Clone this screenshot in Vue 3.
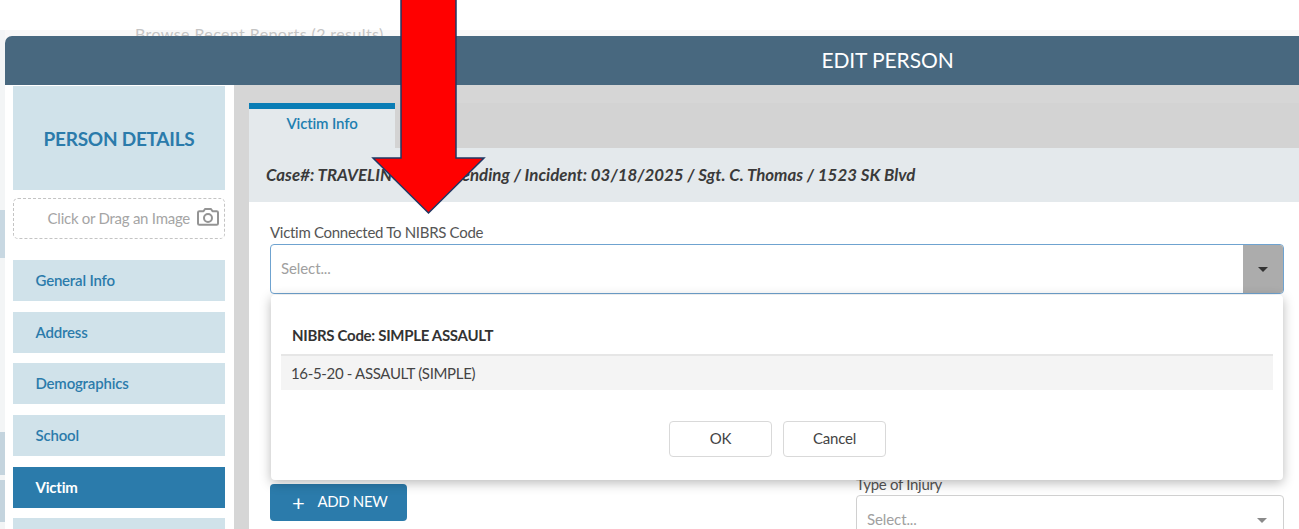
<script setup>
const navItems = [
  { label: 'General Info' },
  { label: 'Address' },
  { label: 'Demographics' },
  { label: 'School' },
  { label: 'Victim', active: true },
  { label: '' },
]
</script>

<template>
  <div class="page">
    <div class="backdrop">
      <div class="back-title">Browse Recent Reports (2 results)</div>
    </div>
    <div class="modal">
      <header class="modal-head">EDIT PERSON</header>
      <div class="modal-body">
        <aside class="side">
          <div class="side-title">PERSON DETAILS</div>
          <div class="drop">
            <span>Click or Drag an Image</span>
            <svg class="cam" width="22" height="18" viewBox="0 0 22 18">
              <path d="M6.500 3.200 8 1h6l1.500 2.200h4.100a1.400 1.400 0 0 1 1.400 1.400v10.800a1.400 1.400 0 0 1-1.400 1.400H2.400A1.400 1.400 0 0 1 1 15.400V4.600a1.400 1.400 0 0 1 1.400-1.400Z" fill="none" stroke="#949494" stroke-width="2" stroke-linejoin="round" />
              <circle cx="11" cy="10" r="4" fill="none" stroke="#949494" stroke-width="2" />
            </svg>
          </div>
          <nav class="nav">
            <div v-for="(item, i) in navItems" :key="i" class="nav-item" :class="{ active: item.active }">{{ item.label }}</div>
          </nav>
        </aside>
        <main class="main">
          <div class="tabs">
            <div class="tab">Victim Info</div>
          </div>
          <div class="case">Case#: TRAVELING-0000 Pending / Incident: 03/18/2025 / Sgt. C. Thomas / 1523 SK Blvd</div>
          <div class="form">
            <label class="label">Victim Connected To NIBRS Code</label>
            <div class="select focus">
              <span class="placeholder">Select...</span>
              <span class="caret-box"><i class="caret"></i></span>
            </div>
            <div class="menu">
              <div class="menu-head">NIBRS Code: SIMPLE ASSAULT</div>
              <div class="menu-row">16-5-20 - ASSAULT (SIMPLE)</div>
              <div class="menu-actions">
                <button class="btn">OK</button>
                <button class="btn">Cancel</button>
              </div>
            </div>
            <div class="lower">
              <button class="add"><span class="plus">+</span>ADD NEW</button>
              <div class="injury">
                <label class="label injury-label">Type of Injury</label>
                <div class="select plain">
                  <span class="placeholder">Select...</span>
                  <i class="caret soft"></i>
                </div>
              </div>
            </div>
          </div>
        </main>
      </div>
    </div>
    <svg class="arrow" width="116" height="216" viewBox="0 0 116 216">
      <path d="M30 -2V158H2L57.500 213 113 158H85V-2Z" fill="#ff0000" stroke="#1f3864" stroke-width="1.5" />
    </svg>
  </div>
</template>

<style scoped>
.page {
  position: relative;
  width: 1299px;
  height: 529px;
  overflow: hidden;
  background: #fff;
  font-family: Lato, "Open Sans", sans-serif;
  color: #3c3c3c;
}
.backdrop {
  position: absolute;
  inset: 0;
  padding: 24px 0 0 135px;
  background:
    linear-gradient(#fff 0 30px, transparent 30px),
    linear-gradient(
      #f3f5f6 0 210px, #c8d8e2 210px 258px, #f3f5f6 258px 432px,
      #c4d4de 432px 475px, #f3f5f6 475px 480px, #c4d4de 480px 522px, #f3f5f6 522px
    ) left / 5px 100% no-repeat,
    #f8f8f8;
}
.back-title {
  font-size: 16px;
  line-height: 20px;
  letter-spacing: .4px;
  color: #c4c4c4;
  white-space: nowrap;
}
.modal {
  position: absolute;
  left: 5px;
  top: 36px;
  width: 1294px;
  height: 493px;
  background: #fff;
  border-radius: 7px 0 0 0;
  overflow: hidden;
  display: flex;
  flex-direction: column;
}
.modal-head {
  flex: 0 0 49px;
  display: flex;
  align-items: center;
  justify-content: center;
  padding: 0 0 2px 471px;
  box-sizing: border-box;
  background: #48687f;
  color: #fff;
  font-size: 21px;
  letter-spacing: -.1px;
}
.modal-body {
  flex: 1;
  display: flex;
  min-height: 0;
}
.side {
  flex: 0 0 229px;
  box-sizing: border-box;
  padding: 1px 9px 0 8px;
  background: #fff;
}
.side-title {
  height: 104px;
  display: flex;
  align-items: center;
  justify-content: center;
  background: #d0e2ea;
  color: #2b7bab;
  font-size: 19px;
  font-weight: 700;
  letter-spacing: -.25px;
}
.drop {
  margin-top: 8px;
  height: 41px;
  box-sizing: border-box;
  border: 1px dashed #c4c4c4;
  border-radius: 5px;
  display: flex;
  align-items: center;
  justify-content: flex-end;
  gap: 7px;
  padding: 0 5px 2px 0;
  color: #a5a5a5;
  font-size: 15px;
  letter-spacing: -.26px;
}
.cam { flex: none; margin-bottom: 1px; }
.nav {
  margin-top: 21px;
  display: flex;
  flex-direction: column;
  gap: 10.700px;
}
.nav-item {
  height: 41px;
  flex: none;
  display: flex;
  align-items: center;
  box-sizing: border-box;
  padding: 0 0 1px 22.500px;
  background: #d0e2ea;
  color: #2b7bab;
  font-size: 15px;
  font-weight: 600;
  letter-spacing: -.2px;
}
.nav-item.active {
  background: #2b7bab;
  color: #fff;
  font-weight: 700;
}
.main {
  flex: 1;
  min-width: 0;
  background: #d6d6d6;
  padding: 18px 0 0 15px;
  display: flex;
  flex-direction: column;
}
.tabs {
  height: 45px;
  flex: none;
  display: flex;
  background: #d3d3d3;
}
.tab {
  width: 146px;
  box-sizing: border-box;
  border-top: 6px solid #0a7db5;
  background: #e4e9ec;
  color: #1f7fb0;
  font-size: 15px;
  font-weight: 600;
  letter-spacing: -.15px;
  text-align: center;
  padding-top: 5px;
}
.case {
  height: 54px;
  flex: none;
  display: flex;
  align-items: center;
  box-sizing: border-box;
  padding: 0 0 2px 17px;
  background: #e4e9ec;
  color: #3a3a3a;
  font-size: 16.850px;
  font-weight: 700;
  font-style: italic;
  letter-spacing: .02px;
  white-space: nowrap;
}
.form {
  flex: 1;
  position: relative;
  background: #fff;
  padding: 21px 15px 0 21px;
}
.label {
  display: block;
  font-size: 15px;
  letter-spacing: -.3px;
  color: #555;
  line-height: 18px;
}
.select {
  display: flex;
  align-items: center;
  justify-content: space-between;
  box-sizing: border-box;
  border-radius: 4px;
  padding-left: 10px;
  font-size: 15px;
  background: #fff;
}
.select.focus {
  margin-top: 3px;
  height: 50px;
  border: 1.5px solid #6fa3d0;
  overflow: hidden;
}
.placeholder {
  color: #a0a0a0;
  letter-spacing: -.1px;
  margin-bottom: 2px;
}
.caret-box {
  width: 40px;
  align-self: stretch;
  background: #acacac;
  display: flex;
  align-items: center;
  justify-content: center;
}
.caret {
  width: 0;
  height: 0;
  border-left: 5px solid transparent;
  border-right: 5px solid transparent;
  border-top: 5px solid #333;
}
.caret.soft {
  border-top-color: #8a8a8a;
  margin-right: 16px;
}
.menu {
  position: absolute;
  z-index: 2;
  left: 22px;
  top: 93px;
  width: 1012px;
  height: 185px;
  box-sizing: border-box;
  padding: 0 10px;
  background: #fff;
  border-radius: 4px;
  box-shadow: 0 3px 12px rgba(0, 0, 0, .28);
}
.menu-head {
  height: 61px;
  box-sizing: border-box;
  padding: 31px 0 0 11px;
  font-size: 15px;
  font-weight: 700;
  letter-spacing: -.3px;
  line-height: 18px;
  color: #333;
  border-bottom: 2px solid #e6e6e6;
}
.menu-row {
  height: 34px;
  display: flex;
  align-items: center;
  padding-left: 10px;
  background: #f4f4f4;
  font-size: 15px;
  letter-spacing: -.33px;
  color: #444;
}
.menu-actions {
  display: flex;
  justify-content: center;
  gap: 11px;
  margin-top: 31px;
  padding-left: 1px;
}
.btn {
  width: 103px;
  height: 36px;
  padding: 0 0 3px;
  border: 1px solid #d9d9d9;
  border-radius: 4px;
  background: #fff;
  color: #444;
  font: 15px Lato, sans-serif;
  letter-spacing: -.2px;
}
.lower {
  margin-top: 190px;
  display: flex;
  justify-content: space-between;
  align-items: flex-start;
}
.add {
  width: 137px;
  height: 37px;
  border: 0;
  border-radius: 4px;
  background: #2b7bab;
  color: #fff;
  font: 15px Lato, sans-serif;
  letter-spacing: -.35px;
  display: flex;
  align-items: center;
  padding: 0 0 4px 22px;
}
.plus {
  font-size: 22px;
  line-height: 1;
  margin-right: 13px;
  margin-top: 5px;
}
.injury { width: 428px; margin-top: -9px; }
.injury-label { height: 20px; }
.select.plain {
  height: 50px;
  border: 1.5px solid #d0d0d0;
}
.arrow {
  position: absolute;
  left: 371px;
  top: 0;
  z-index: 5;
  overflow: visible;
}
</style>
